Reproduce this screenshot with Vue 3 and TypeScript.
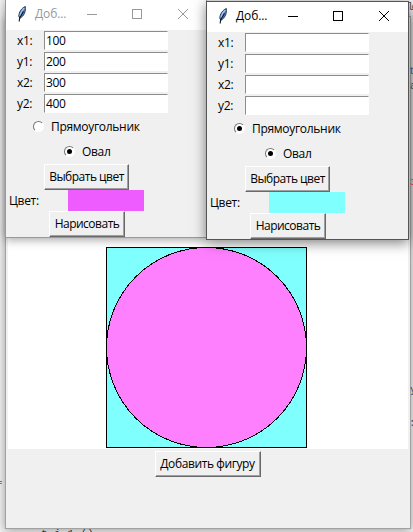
<script setup lang="ts">
import { ref } from 'vue'

interface Dialog {
  id: string
  active: boolean
  fields: { label: string; value: string }[]
  rect: boolean
  oval: boolean
  color: string
}

const labels = ['x1:', 'y1:', 'x2:', 'y2:']
const makeFields = (values: string[]) => labels.map((label, i) => ({ label, value: values[i] ?? '' }))

const dialogs = ref<Dialog[]>([
  { id: 'first', active: false, fields: makeFields(['100', '200', '300', '400']), rect: false, oval: true, color: '#ee5cff' },
  { id: 'second', active: true, fields: makeFields([]), rect: true, oval: true, color: '#80ffff' },
])
</script>

<template>
  <div class="desktop">
    <span class="code c1">lo</span>
    <span class="code c2">t</span>
    <span class="code c3">a</span>
    <span class="code c4 red">з</span>
    <span class="code c5">y</span>
    <span class="code c6">:</span>
    <span class="code c7 red">f</span>
    <span class="code c8">t   i 1     ()</span>

    <main class="main-window">
      <div class="canvas">
        <svg width="202" height="202" viewBox="0 0 202 202" shape-rendering="crispEdges">
          <rect x="0.5" y="0.5" width="200" height="200" fill="#80ffff" stroke="#000" />
          <ellipse cx="100.5" cy="100.5" rx="100" ry="100" fill="#ff80ff" stroke="#000" />
        </svg>
      </div>
      <button class="btn add"><span>Добавить фигуру</span></button>
    </main>

    <section v-for="d in dialogs" :key="d.id" class="dialog" :class="[d.id, { active: d.active }]">
      <header class="titlebar">
        <svg class="feather" width="12" height="18" viewBox="0 0 12 18">
          <path d="M9.3 1.5C5.8 3 2.8 6.8 2.8 11.5L4 13.2C8 11 10 6.5 9.3 1.5Z" fill="#4f7fc4" stroke="#1c2c4c" stroke-width="0.9" />
          <path d="M8.3 3C5.8 5.3 4.4 8 4 11" fill="none" stroke="#a8c6ee" stroke-width="1.1" />
          <path d="M7.5 6.5L3.6 13L3.2 16.5" fill="none" stroke="#101820" stroke-width="1.1" />
        </svg>
        <span class="title">Доб...</span>
        <svg class="controls" width="103" height="12" viewBox="0 0 103 12" fill="none" stroke="currentColor">
          <path d="M0 6.5H10" />
          <rect x="45.5" y="1.5" width="9" height="9" />
          <path d="M91 1L101 11M101 1L91 11" />
        </svg>
      </header>
      <div class="body">
        <label v-for="f in d.fields" :key="f.label" class="field">
          <span class="name">{{ f.label }}</span>
          <input v-model="f.value" type="text" />
        </label>
        <div class="radio rect"><i class="dot" :class="{ on: d.rect }"></i><span>Прямоугольник</span></div>
        <div class="radio oval"><i class="dot" :class="{ on: d.oval }"></i><span>Овал</span></div>
        <button class="btn pick"><span>Выбрать цвет</span></button>
        <div class="color-row">
          <span class="name">Цвет:</span>
          <span class="swatch" :style="{ background: d.color }"></span>
        </div>
        <button class="btn draw"><span>Нарисовать</span></button>
      </div>
    </section>
  </div>
</template>

<style>
body {
  margin: 0;
  overflow: hidden;
}
</style>

<style scoped>
.desktop {
  position: relative;
  width: 413px;
  height: 532px;
  overflow: hidden;
  background: #f2f2f2;
  font-family: "Open Sans", "Noto Sans", sans-serif;
  font-size: 12px;
  line-height: 16px;
  letter-spacing: -0.3px;
  color: #000;
}
.code {
  position: absolute;
  font: 11px/12px "Liberation Mono", monospace;
  letter-spacing: 0;
  color: #444;
  white-space: pre;
}
.code.red { color: #c8283c; }
.c1 { left: 407px; top: 1px; z-index: 1; letter-spacing: -2px; }
.c2 { left: 409px; top: 65px; z-index: 1; color: #34508c; }
.c3 { left: 410px; top: 80px; z-index: 1; }
.c4 { left: 410px; top: 176px; z-index: 1; }
.c5 { left: 410px; top: 384px; z-index: 1; }
.c6 { left: 409px; top: 417px; z-index: 1; }
.c7 { left: -4px; top: 480px; }
.c8 { left: 41px; top: 528px; }

.main-window {
  position: absolute;
  left: 5px;
  top: 16px;
  box-sizing: border-box;
  width: 406px;
  height: 513px;
  border: 1px solid #a2a2a2;
  background: #f0f0f0;
  box-shadow: 0 1px 9px rgba(0, 0, 0, 0.38);
  display: flex;
  flex-direction: column;
  align-items: center;
}
.canvas {
  box-sizing: border-box;
  width: 400px;
  height: 432px;
  padding: 230px 0 0 98px;
  background: #fff;
}
.canvas svg { display: block; }

.btn {
  display: block;
  box-sizing: border-box;
  height: 26px;
  padding: 0;
  border: 1px solid;
  border-color: #fff #696969 #696969 #fff;
  border-radius: 0;
  background: #f0f0f0;
  box-shadow: inset -1px -1px 0 #a0a0a0;
  font: inherit;
  letter-spacing: -0.5px;
  color: inherit;
  white-space: nowrap;
}
.add { width: 106px; margin-top: 2px; margin-right: 1px; letter-spacing: -0.4px; }

.dialog {
  position: absolute;
  box-sizing: border-box;
  width: 202px;
  border: 1px solid #999;
  background: #f0f0f0;
  box-shadow: 0 2px 9px rgba(0, 0, 0, 0.35);
}
.first { left: 5px; top: -1px; height: 239px; }
.second { left: 206px; top: 1px; width: 203px; height: 239px; }
.dialog.active {
  border-color: #555;
  box-shadow: 0 3px 12px rgba(0, 0, 0, 0.5);
}
.titlebar {
  display: flex;
  align-items: center;
  box-sizing: border-box;
  height: 30px;
  padding: 0 0 2px 10px;
  background: #fff;
  color: #999;
}
.active .titlebar { color: #000; }
.feather { margin-right: 7px; }
.title { width: 52px; letter-spacing: -0.1px; }
.controls { flex: none; }

.body { display: flex; flex-direction: column; }
.field {
  display: flex;
  align-items: center;
  height: 21px;
  padding-left: 11px;
}
.field .name { width: 27px; }
.field input {
  box-sizing: border-box;
  width: 124px;
  height: 19px;
  margin: 0;
  padding: 0 0 0 1px;
  border: 1px solid;
  border-color: #8c8c8c #fff #fff #8c8c8c;
  border-radius: 0;
  background: #fff;
  outline: none;
  font: inherit;
  letter-spacing: inherit;
  color: #000;
}
.radio {
  display: flex;
  align-items: center;
  gap: 7px;
  height: 25px;
}
.rect { padding-left: 27px; }
.oval { padding-left: 58px; }
.dot {
  box-sizing: border-box;
  display: flex;
  align-items: center;
  justify-content: center;
  width: 11px;
  height: 11px;
  margin-top: -1px;
  border: 1.5px solid;
  border-color: #777 #fff #fff #777;
  border-radius: 50%;
  background: #fff;
}
.dot.on::after {
  content: "";
  width: 5px;
  height: 5px;
  border-radius: 50%;
  background: #000;
}
.pick { width: 85px; margin-left: 38px; }
.color-row {
  display: flex;
  align-items: center;
  height: 21px;
  padding-left: 3px;
}
.color-row .name { width: 59px; padding-top: 1px; }
.swatch { width: 76px; height: 21px; }
.draw { width: 76px; margin-left: 43px; }
</style>
